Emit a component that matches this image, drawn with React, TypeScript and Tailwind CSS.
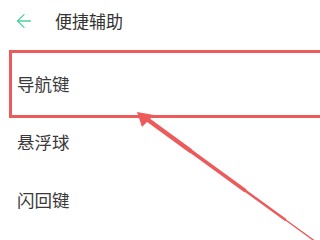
import { ArrowLeft } from "lucide-react";

const items = ["导航键", "悬浮球", "闪回键"];

export default function App() {
  return (
    <div
      className="relative w-[320px] h-[240px] overflow-hidden bg-white text-[#3a3a3a]"
      style={{ fontFamily: '"Noto Sans CJK SC", "Noto Sans", sans-serif' }}
    >
      <header className="flex items-center h-[42px] pl-[13px]">
        <ArrowLeft className="w-[22px] h-[22px] text-[#4fcf9f]" strokeWidth={1.4} />
        <span className="ml-[20px] text-[17px] text-[#333]">便捷辅助</span>
      </header>

      <ul className="mt-[13px]">
        {items.map((label) => (
          <li key={label} className="flex items-center h-[58px] pl-[17px] text-[17.5px]">
            {label}
          </li>
        ))}
      </ul>

      {/* annotation: box round the first row */}
      <div className="absolute left-[9px] top-[50px] w-[330px] h-[68px] border-[3px] border-[#ec5b5b]" />

      {/* annotation: arrow pointing at the box */}
      <svg className="absolute left-0 top-0" width="320" height="240" viewBox="0 0 320 240">
        <g stroke="#ec5b5b" strokeLinecap="round">
          <line x1="144" y1="117" x2="190" y2="150.5" strokeWidth="4.5" />
          <line x1="190" y1="150.5" x2="245" y2="190.5" strokeWidth="3.5" />
          <line x1="245" y1="190.5" x2="285" y2="219.5" strokeWidth="2.5" />
          <line x1="285" y1="219.5" x2="314" y2="240.5" strokeWidth="1.5" />
        </g>
        <polygon points="137,112 154,115 142,127" fill="#ec5b5b" />
      </svg>
    </div>
  );
}
